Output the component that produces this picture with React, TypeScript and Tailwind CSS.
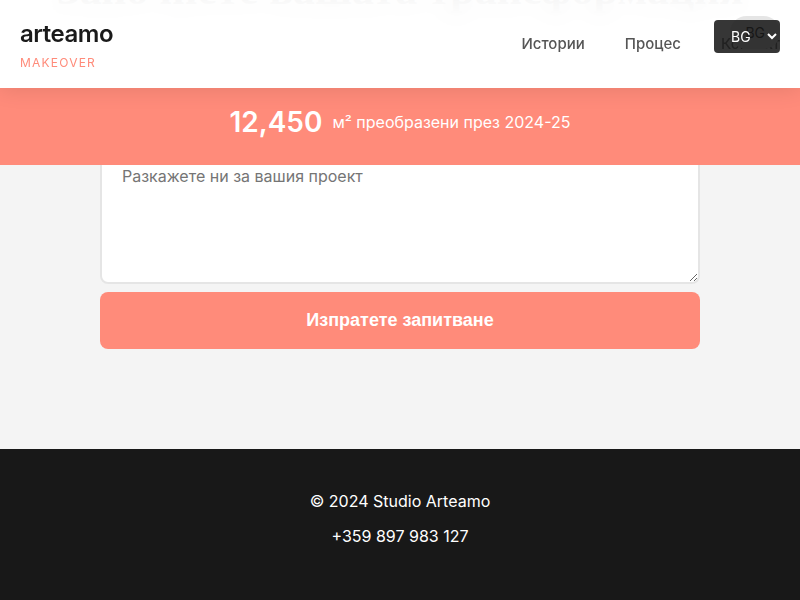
export default function App() {
  return (
    <div className="flex min-h-screen flex-col bg-[#f4f4f4] font-['Inter',sans-serif] text-base text-[#1a1a1a]">
      <header className="sticky top-0 z-20 h-22">
        <h2 aria-hidden="true" className="absolute inset-x-0 -top-[34px] text-center font-['Liberation_Serif',serif] text-[44px] leading-12 font-bold whitespace-nowrap">
          Започнете вашата трансформация
        </h2>
        <div className="relative flex h-22 items-center justify-between bg-white/95 px-5 shadow-[0_2px_20px_rgba(0,0,0,0.1)] backdrop-blur-[10px]">
          <a href="#top" className="flex flex-col pt-1">
            <span className="text-2xl leading-8 font-semibold tracking-[-0.02em]">arteamo</span>
            <span className="text-xs leading-[25px] tracking-widest text-[#ff8b7a]">MAKEOVER</span>
          </a>
          <nav className="flex gap-10 text-[15px] font-medium text-[#555555]">
            <a href="#stories">Истории</a>
            <a href="#process">Процес</a>
            <a href="#contact">Контакт</a>
          </nav>
        </div>
        <button type="button" className="absolute top-4 right-5 h-[33px] rounded-full bg-[#e5e5e5] px-[15px] text-sm text-black">BG</button>
        <select aria-label="Език" className="absolute top-5 right-5 h-[33px] w-[66px] rounded bg-[#1a1a1a]/88 pr-0 pl-[13px] text-sm text-white">
          <option>BG</option>
          <option>EN</option>
        </select>
      </header>
      <section className="sticky top-22 z-10 flex h-[77px] items-start justify-center gap-2.5 bg-[#ff8b7a] pt-4 text-white">
        <strong className="text-[28px] leading-9 font-semibold">12,450</strong>
        <span className="leading-9">м² преобразени през 2024-25</span>
      </section>
      <main className="px-5 pb-25">
        <form className="mx-auto flex max-w-[600px] flex-col gap-2">
          <textarea
            aria-label="Вашият проект"
            placeholder="Разкажете ни за вашия проект"
            className="-mt-[19px] h-[138px] w-full resize-y rounded-lg border-2 border-[#e5e5e5] bg-white px-5 py-4 placeholder:text-[#757575]"
          />
          <button type="submit" className="rounded-lg bg-[#ff8b7a] py-[15px] font-['Liberation_Sans',sans-serif] text-lg leading-[27px] font-semibold text-white">
            Изпратете запитване
          </button>
        </form>
      </main>
      <footer className="flex-1 bg-[#181818] px-5 py-10 text-center leading-6 text-white">
        <p>© 2024 Studio Arteamo</p>
        <p className="mt-[11px]"><a href="tel:+359897983127">+359 897 983 127</a></p>
      </footer>
    </div>
  );
}
